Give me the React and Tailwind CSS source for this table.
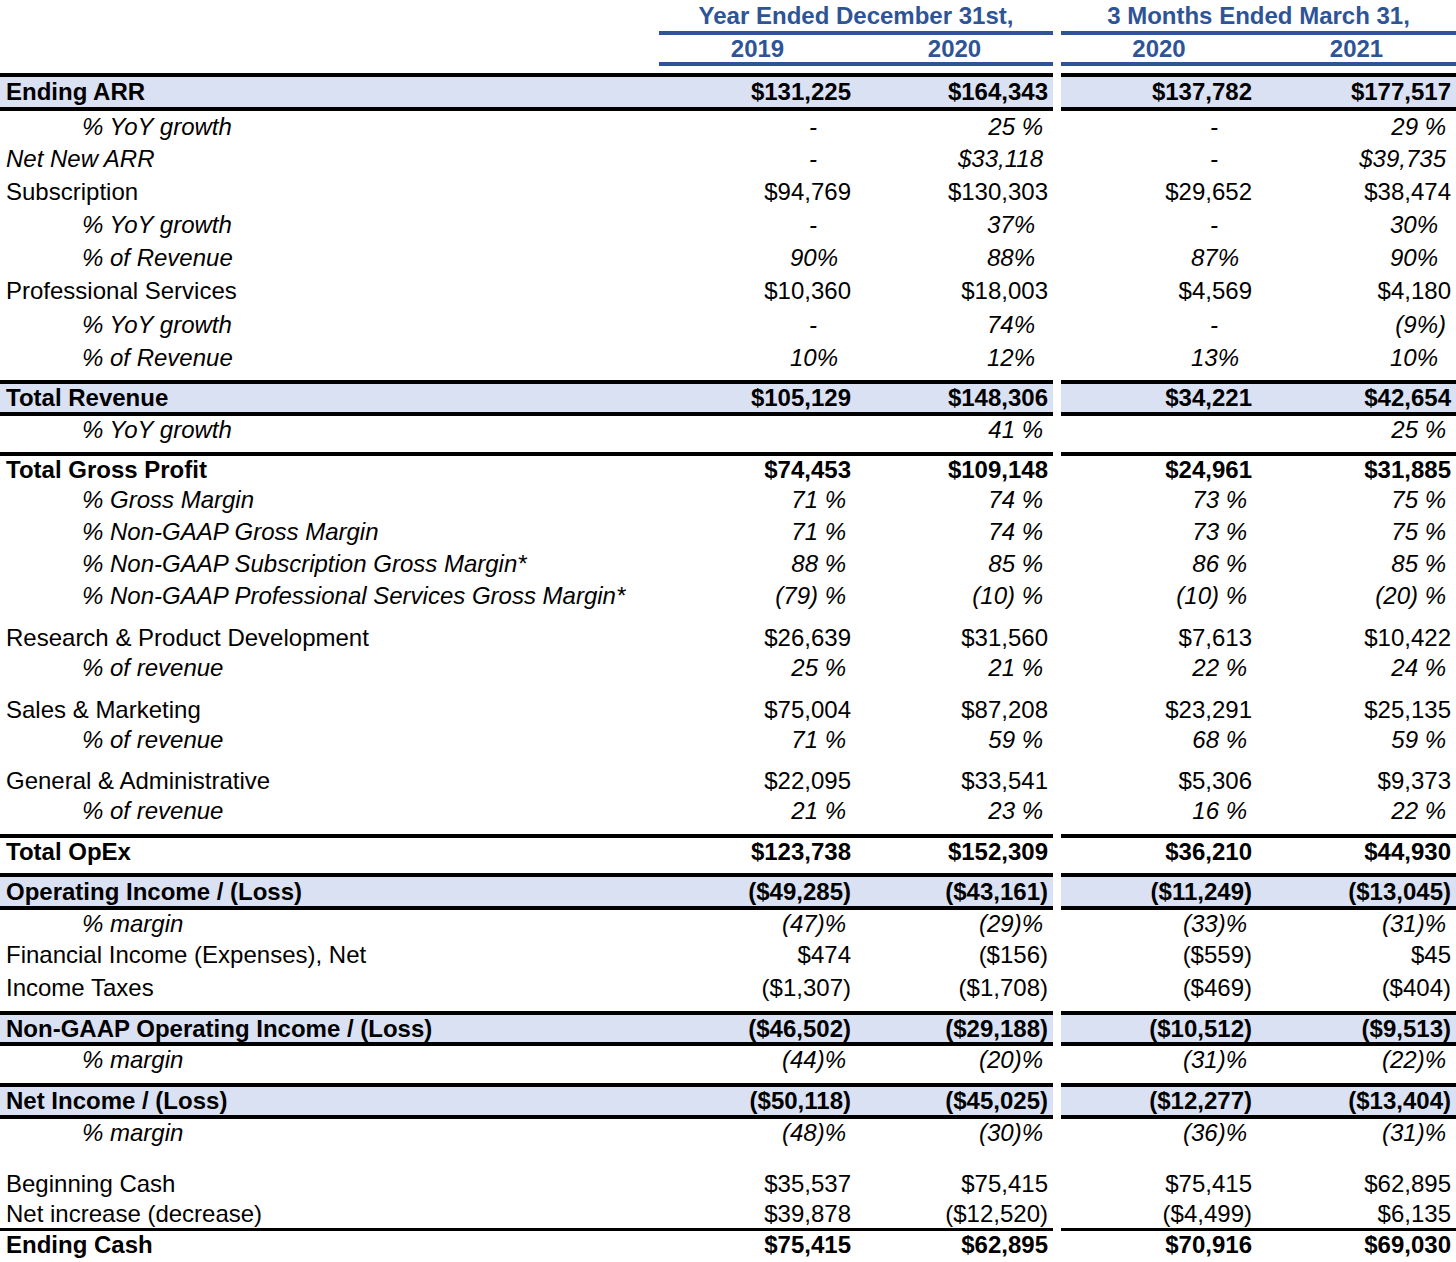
import React from "react";

const BLUE = "bg-[#2f5496]";

// one horizontal rule split into the two column groups
function Rule({ h = "h-[4px]", color = "bg-black", full = true }) {
  return (
    <div className={`flex gap-2 ${h}`}>
      {full ? (
        <div className={`w-[1053px] ${color}`} />
      ) : (
        <div className="w-[1053px] flex">
          <div className="w-[659px]" />
          <div className={`flex-1 ${color}`} />
        </div>
      )}
      <div className={`w-[395px] ${color}`} />
    </div>
  );
}

function padFor(v, italic) {
  if (v === "-") return "pr-[39px]";
  if (/\d%$/.test(v)) return "pr-[18px]";
  if (italic) return "pr-[10px]";
  return "pr-[5px]";
}

function Cell({ v, italic, width }) {
  return (
    <div className={`${width} text-right whitespace-nowrap ${padFor(v, italic)}`}>
      {v}
    </div>
  );
}

function Row({ h, label, indent, italic, bold, band, vals }) {
  const bg = band ? "bg-[#d9e1f2]" : "";
  const font = `${bold ? "font-bold" : ""} ${italic ? "italic" : ""}`;
  return (
    <div className={`flex gap-2 ${h} ${font}`}>
      <div className={`w-[1053px] flex items-center ${bg}`}>
        <div className={`w-[659px] whitespace-nowrap ${indent ? "pl-[82px]" : "pl-[6px]"}`}>
          {label}
        </div>
        <Cell v={vals[0]} italic={italic} width="w-[197px]" />
        <Cell v={vals[1]} italic={italic} width="w-[197px]" />
      </div>
      <div className={`w-[395px] flex items-center ${bg}`}>
        <Cell v={vals[2]} italic={italic} width="w-[196px]" />
        <Cell v={vals[3]} italic={italic} width="w-[199px]" />
      </div>
    </div>
  );
}

const Space = ({ h }) => <div className={h} />;

export default function App() {
  return (
    <div
      className="w-[1456px] h-[1262px] bg-white text-black text-[24px] leading-none overflow-hidden"
      style={{ fontFamily: '"Liberation Sans", Arial, sans-serif' }}
    >
      {/* header */}
      <div className="flex gap-2 h-[31px] items-center font-bold text-[#2f5496]">
        <div className="w-[1053px] flex">
          <div className="w-[659px]" />
          <div className="flex-1 text-center">Year Ended December 31st,</div>
        </div>
        <div className="w-[395px] text-center">3 Months Ended March 31,</div>
      </div>
      <Rule color={BLUE} full={false} />
      <div className="flex gap-2 h-[27px] items-center font-bold text-[#2f5496]">
        <div className="w-[1053px] flex">
          <div className="w-[659px]" />
          <div className="w-[197px] text-center">2019</div>
          <div className="w-[197px] text-center">2020</div>
        </div>
        <div className="w-[395px] flex">
          <div className="w-[196px] text-center">2020</div>
          <div className="w-[199px] text-center">2021</div>
        </div>
      </div>
      <Rule color={BLUE} full={false} />
      <Space h="h-[7px]" />

      <Rule />
      <Row h="h-[30px]" bold band label="Ending ARR" vals={["$131,225", "$164,343", "$137,782", "$177,517"]} />
      <Rule />
      <Row h="h-[31px]" italic indent label="% YoY growth" vals={["-", "25 %", "-", "29 %"]} />
      <Row h="h-[33px]" italic label="Net New ARR" vals={["-", "$33,118", "-", "$39,735"]} />
      <Row h="h-[33px]" label="Subscription" vals={["$94,769", "$130,303", "$29,652", "$38,474"]} />
      <Row h="h-[33px]" italic indent label="% YoY growth" vals={["-", "37%", "-", "30%"]} />
      <Row h="h-[33px]" italic indent label="% of Revenue" vals={["90%", "88%", "87%", "90%"]} />
      <Row h="h-[34px]" label="Professional Services" vals={["$10,360", "$18,003", "$4,569", "$4,180"]} />
      <Row h="h-[33px]" italic indent label="% YoY growth" vals={["-", "74%", "-", "(9%)"]} />
      <Row h="h-[34px]" italic indent label="% of Revenue" vals={["10%", "12%", "13%", "10%"]} />
      <Space h="h-[5px]" />

      <Rule />
      <Row h="h-[28px]" bold band label="Total Revenue" vals={["$105,129", "$148,306", "$34,221", "$42,654"]} />
      <Rule />
      <Row h="h-[28px]" italic indent label="% YoY growth" vals={["", "41 %", "", "25 %"]} />
      <Space h="h-[8px]" />

      <Rule />
      <Row h="h-[28px]" bold label="Total Gross Profit" vals={["$74,453", "$109,148", "$24,961", "$31,885"]} />
      <Row h="h-[32px]" italic indent label="% Gross Margin" vals={["71 %", "74 %", "73 %", "75 %"]} />
      <Row h="h-[32px]" italic indent label="% Non-GAAP Gross Margin" vals={["71 %", "74 %", "73 %", "75 %"]} />
      <Row h="h-[32px]" italic indent label="% Non-GAAP Subscription Gross Margin*" vals={["88 %", "85 %", "86 %", "85 %"]} />
      <Row h="h-[32px]" italic indent label="% Non-GAAP Professional Services Gross Margin*" vals={["(79) %", "(10) %", "(10) %", "(20) %"]} />
      <Space h="h-[11px]" />

      <Row h="h-[30px]" label="Research & Product Development" vals={["$26,639", "$31,560", "$7,613", "$10,422"]} />
      <Row h="h-[30px]" italic indent label="% of revenue" vals={["25 %", "21 %", "22 %", "24 %"]} />
      <Space h="h-[12px]" />
      <Row h="h-[30px]" label="Sales & Marketing" vals={["$75,004", "$87,208", "$23,291", "$25,135"]} />
      <Row h="h-[30px]" italic indent label="% of revenue" vals={["71 %", "59 %", "68 %", "59 %"]} />
      <Space h="h-[11px]" />
      <Row h="h-[30px]" label="General & Administrative" vals={["$22,095", "$33,541", "$5,306", "$9,373"]} />
      <Row h="h-[30px]" italic indent label="% of revenue" vals={["21 %", "23 %", "16 %", "22 %"]} />
      <Space h="h-[8px]" />

      <Rule />
      <Row h="h-[28px]" bold label="Total OpEx" vals={["$123,738", "$152,309", "$36,210", "$44,930"]} />
      <Space h="h-[7px]" />
      <Rule />
      <Row h="h-[29px]" bold band label="Operating Income / (Loss)" vals={["($49,285)", "($43,161)", "($11,249)", "($13,045)"]} />
      <Rule />
      <Row h="h-[28px]" italic indent label="% margin" vals={["(47)%", "(29)%", "(33)%", "(31)%"]} />
      <Row h="h-[34px]" label="Financial Income (Expenses), Net" vals={["$474", "($156)", "($559)", "$45"]} />
      <Row h="h-[32px]" label="Income Taxes" vals={["($1,307)", "($1,708)", "($469)", "($404)"]} />
      <Space h="h-[7px]" />

      <Rule />
      <Row h="h-[27px]" bold band label="Non-GAAP Operating Income / (Loss)" vals={["($46,502)", "($29,188)", "($10,512)", "($9,513)"]} />
      <Rule />
      <Row h="h-[28px]" italic indent label="% margin" vals={["(44)%", "(20)%", "(31)%", "(22)%"]} />
      <Space h="h-[9px]" />

      <Rule />
      <Row h="h-[28px]" bold band label="Net Income / (Loss)" vals={["($50,118)", "($45,025)", "($12,277)", "($13,404)"]} />
      <Rule />
      <Row h="h-[28px]" italic indent label="% margin" vals={["(48)%", "(30)%", "(36)%", "(31)%"]} />
      <Space h="h-[22px]" />

      <Row h="h-[30px]" label="Beginning Cash" vals={["$35,537", "$75,415", "$75,415", "$62,895"]} />
      <Row h="h-[29px]" label="Net increase (decrease)" vals={["$39,878", "($12,520)", "($4,499)", "$6,135"]} />
      <Rule h="h-[3px]" />
      <Row h="h-[28px]" bold label="Ending Cash" vals={["$75,415", "$62,895", "$70,916", "$69,030"]} />
    </div>
  );
}
